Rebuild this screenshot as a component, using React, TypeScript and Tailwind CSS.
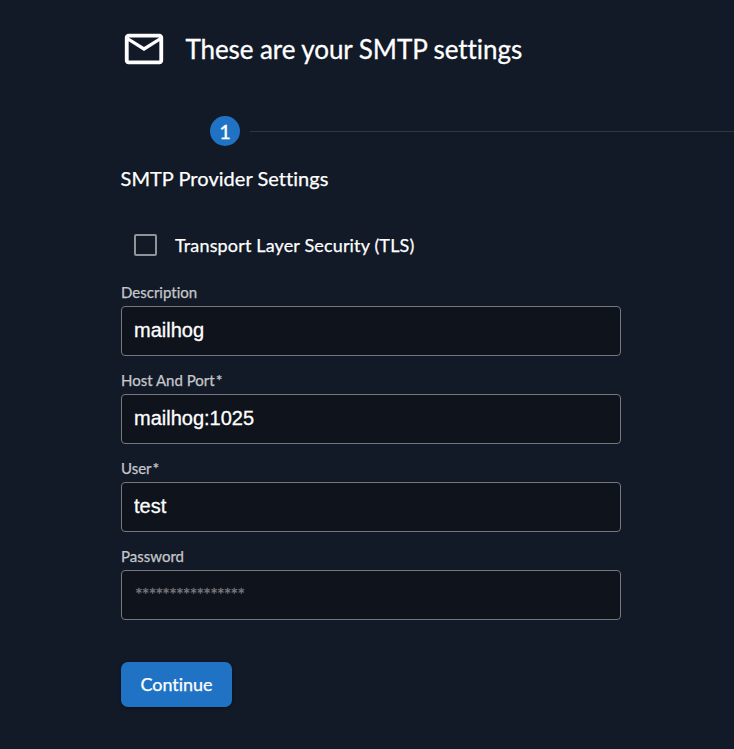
type FieldProps = { label: string; required?: boolean; value?: string; placeholder?: string };

function Field({ label, required, value, placeholder }: FieldProps) {
  return (
    <label className="block h-[88px] w-[500px]">
      <span className="block h-[22px] text-[15px] leading-[16px] text-[#c5c7cb] [-webkit-text-stroke:0.25px]">
        {label}
        {required && <span className="ml-px text-[16px] leading-none">*</span>}
      </span>
      <input
        type="text"
        defaultValue={value}
        placeholder={placeholder}
        className="block h-[50px] w-full rounded-[4px] border border-[#77787d] bg-[#0f131c] px-3 pb-px font-['Liberation_Sans',Arial,sans-serif] text-[20px] text-white outline-none [-webkit-text-stroke:0.3px] placeholder:pl-px placeholder:font-[Lato,sans-serif] placeholder:text-[18px] placeholder:tracking-[-0.82px] placeholder:text-[#77797e]"
      />
    </label>
  );
}

function MailIcon() {
  return (
    <svg viewBox="0 0 24 24" className="h-[46px] w-[46px] shrink-0" fill="white">
      <path d="M22 6c0-1.100-.9-2-2-2H4c-1.100 0-2 .9-2 2v12c0 1.100.9 2 2 2h16c1.100 0 2-.9 2-2V6zm-2 0-8 5-8-5h16zm0 12H4V8l8 5 8-5v10z" />
    </svg>
  );
}

export default function App() {
  return (
    <main className="h-[749px] w-full overflow-hidden bg-[#121927] pl-[121px] font-[Lato,sans-serif] text-white [font-variant-ligatures:none]">
      <header className="flex h-[97px] items-center">
        <MailIcon />
        <h1 className="ml-[18.4px] whitespace-nowrap text-[26px] leading-9 tracking-[-0.07px] [-webkit-text-stroke:0.3px]">
          These are your SMTP settings
        </h1>
      </header>
      <div className="mt-px flex h-[66px] items-center pl-[89px]">
        <span className="flex h-[30px] w-[30px] items-center justify-center rounded-full bg-[#2073c4] text-[20px] [-webkit-text-stroke:0.3px]">1</span>
        <span className="ml-[10px] h-px flex-1 bg-[#303642]" />
      </div>
      <h2 className="-ml-[0.5px] h-[70px] pt-px text-[20px] leading-[26px] tracking-[0.04px] [-webkit-text-stroke:0.25px]">SMTP Provider Settings</h2>
      <label className="flex h-[22px] items-center pl-[13px]">
        <input type="checkbox" className="h-[22px] w-[23px] appearance-none rounded-[2px] border-2 border-[#909499]" />
        <span className="ml-[18px] text-[18px] tracking-[0.15px] [-webkit-text-stroke:0.25px]">Transport Layer Security (TLS)</span>
      </label>
      <form className="pt-[28px]">
        <Field label="Description" value="mailhog" />
        <Field label="Host And Port" required value="mailhog:1025" />
        <Field label="User" required value="test" />
        <Field label="Password" placeholder="****************" />
        <button type="button" className="mt-[26px] h-[45px] w-[111px] rounded-[7px] bg-[#2073c4] text-[18px] tracking-[-0.05px] shadow-[0_1px_3px_rgba(0,0,0,0.4)] [-webkit-text-stroke:0.25px]">
          Continue
        </button>
      </form>
    </main>
  );
}
